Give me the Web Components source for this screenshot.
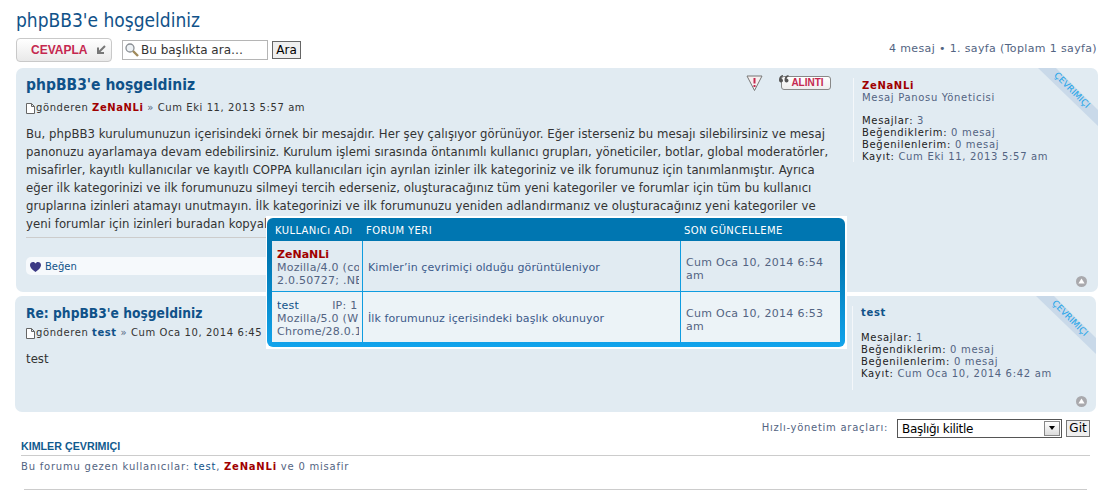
<!DOCTYPE html>
<html lang="tr">
<head>
<meta charset="utf-8">
<title>phpBB3'e hoşgeldiniz</title>
<style>
html, body { margin: 0; background: #fff; }
body { font-family: "DejaVu Sans", Verdana, sans-serif; width: 1111px; height: 493px; overflow: hidden; position: relative; }
</style>
</head>
<body>
<forum-page></forum-page>

<script>
// shared bits
const COND = '"DejaVu Sans Condensed", "DejaVu Sans", sans-serif';

class TopicToolbar extends HTMLElement {
  constructor() {
    super();
    this.attachShadow({mode: 'open'}).innerHTML = `
<style>
:host { display: flex; align-items: center; height: 24px; margin: 0 14px 6px 16px; font-family: "DejaVu Sans", sans-serif; }
.reply { box-sizing: border-box; width: 96px; height: 24px; border: 1px solid #c9c9c9; border-radius: 4px; background: linear-gradient(#fff, #e9e9e9); display: flex; align-items: center; padding-left: 14px; gap: 9px; font: bold 12px "Liberation Sans", sans-serif; color: #c5284f; }
.search { box-sizing: border-box; width: 146px; height: 20px; margin-left: 10px; border: 1px solid #b5b5b5; display: flex; align-items: center; gap: 1px; padding-left: 1px; font-size: 12px; color: #333; background: #fff; }
.go { box-sizing: border-box; width: 29px; height: 18px; margin-left: 4px; border: 1px solid #666; background: #efefef; font-size: 12px; line-height: 16px; text-align: center; color: #000; }
.pages { margin: 0 0 4px auto; font-size: 11px; color: #536482; letter-spacing: .36px; }
</style>
<div class="reply">CEVAPLA
  <svg width="10" height="10" viewBox="0 0 10 10"><path d="M9 1 3 7M2 2.5V8H8" fill="none" stroke="#777" stroke-width="2"/></svg>
</div>
<div class="search">
  <svg width="16" height="16" viewBox="0 0 16 16"><circle cx="6" cy="6" r="4" fill="#eef2f5" stroke="#8a8f94" stroke-width="1.3"/><path d="M9 9 14 14" stroke="#a08a5a" stroke-width="2.4"/></svg>
  <span>Bu başlıkta ara…</span>
</div>
<div class="go">Ara</div>
<div class="pages">4 mesaj • 1. sayfa (Toplam 1 sayfa)</div>`;
  }
}

class ForumPost extends HTMLElement {
  constructor() {
    super();
    const root = this.attachShadow({mode: 'open'});
    root.innerHTML = `
<style>
:host { display: block; position: relative; margin: 0 13px 4px 16px; background: #e1ebf2; border-radius: 7px; overflow: hidden; font-family: "DejaVu Sans", sans-serif; }
.wrap { display: flex; height: 100%; padding: 10px 0 0 var(--pad, 10px); box-sizing: border-box; }
.main { width: var(--main, 811px); flex: none; }
.side { box-sizing: border-box; margin-left: 16px; padding: var(--side-top, 2px) 0 0 8px; border-left: 1px solid #f4f7fa; font-size: 10px; line-height: 12px; letter-spacing: .68px; color: #536482; height: 84px; white-space: nowrap; }
h3 { margin: 0; font: bold var(--title, 15.5px)/15px ${COND}; color: #105289; }
.meta { display: flex; align-items: center; margin-top: var(--meta-gap, 9px); font-size: 10px; line-height: 12px; letter-spacing: .58px; color: #333; white-space: nowrap; }
.meta svg { margin-right: 1px; }
.raquo { color: #536482; }
.slot-box { display: block; margin-top: var(--body-gap, 11px); font: 13px/18px ${COND}; color: #333; white-space: nowrap; letter-spacing: .045px; }
.tools { position: absolute; top: 7px; left: 730px; display: flex; gap: 16px; align-items: flex-start; }
.quote { position: relative; width: 52px; height: 15px; }
.quote i { position: absolute; left: 2px; top: 1px; box-sizing: border-box; width: 50px; height: 14px; border: 1px solid #888; border-radius: 3px; background: linear-gradient(#fff, #eee); font: bold 10px/12px "Liberation Sans", sans-serif; color: #c5284f; text-align: center; padding-left: 3px; }
.quote svg { position: absolute; left: 0; top: 0; z-index: 1; }
.top { position: absolute; right: var(--top-right, 11px); bottom: 5px; width: 11px; height: 11px; }
.ribbon { position: absolute; right: 0; top: 0; width: 60px; height: 60px; background: #c9d9e9; clip-path: polygon(0 0, 18px 0, 60px 42px, 60px 58px); }
.ribbon-text { position: absolute; right: -9px; top: 17px; width: 70px; text-align: center; font: 9px/10px "DejaVu Sans", sans-serif; color: #1ea5ea; transform: rotate(45deg); }
</style>
<div class="wrap">
  <div class="main">
    <h3></h3>
    <div class="meta">
      <svg width="9" height="11" viewBox="0 0 9 11"><path d="M.5.5H5.5L8.5 3.5V10.5H.5ZM5.5.5V3.5H8.5" fill="#fff" stroke="#666"/></svg>
      <span>gönderen&nbsp;<slot name="author"></slot> <span class="raquo">»</span> <slot name="date"></slot></span>
    </div>
    <div class="slot-box"><slot></slot></div>
    <slot name="footer"></slot>
  </div>
  <div class="side"><slot name="profile"></slot></div>
</div>
<div class="ribbon"></div>
<div class="ribbon-text">ÇEVRIMIÇI</div>
<svg class="top" viewBox="0 0 11 11"><circle cx="5.5" cy="5.5" r="5.5" fill="#a9a9ad"/><path d="M5.5 2.6 8.6 7.4H2.4Z" fill="#fff"/></svg>`;
    root.querySelector('h3').textContent = this.getAttribute('heading');
    this.style.height = this.getAttribute('h') + 'px';
    if (this.hasAttribute('tools')) {
      const t = document.createElement('div');
      t.className = 'tools';
      t.innerHTML = `
<svg width="17" height="16" viewBox="0 0 17 16"><path d="M1 1H16L8.5 15.5Z" fill="#f6efef" stroke="#777"/><path d="M8.5 3V8.5M8.5 10V12" stroke="#c5284f" stroke-width="2"/></svg>
<div class="quote"><svg width="10" height="8" viewBox="0 0 10 8"><path d="M4 0C1.5 .5 0 2 0 5 0 6.5 .8 7.5 2 7.5S4 6.6 4 5.5 3.2 3.8 2.2 3.8C2.2 2.8 3 2 4 1.6ZM9.5 0C7 .5 5.5 2 5.5 5 5.5 6.5 6.3 7.5 7.5 7.5S9.5 6.6 9.5 5.5 8.7 3.8 7.7 3.8C7.7 2.8 8.5 2 9.5 1.6Z" fill="#555"/></svg><i>ALINTI</i></div>`;
      root.appendChild(t);
    }
  }
}

class LikeBar extends HTMLElement {
  constructor() {
    super();
    this.attachShadow({mode: 'open'}).innerHTML = `
<style>
:host { display: block; border-top: 1px solid #ccc; margin-top: 4px; padding-top: 19px; }
div { box-sizing: border-box; height: 18px; width: 100%; background: #f6f9fc; border-radius: 5px; display: flex; align-items: center; gap: 4px; padding: 2px 0 0 4px; font: 10px/12px "DejaVu Sans", sans-serif; color: #105289; }
</style>
<div>
  <svg width="11" height="10" viewBox="0 0 11 10"><path d="M5.5 10C3 8 0 6 0 3 0 1 1.5 0 3 0 4.2 0 5 .7 5.5 1.5 6 .7 6.8 0 8 0 9.5 0 11 1 11 3 11 6 8 8 5.5 10Z" fill="#3c3a85"/></svg>
  <span>Beğen</span>
</div>`;
  }
}

class OnlinePopup extends HTMLElement {
  constructor() {
    super();
    this.attachShadow({mode: 'open'}).innerHTML = `
<style>
:host { display: block; position: absolute; left: 266px; top: 216px; box-sizing: border-box; width: 581px; height: 133px; background: #fff; padding: 2px 2px 2px 1px; font-family: "DejaVu Sans", sans-serif; }
.box { box-sizing: border-box; height: 100%; padding: 0 5px 5px; border-radius: 6px; background: linear-gradient(#0076b1 0, #0076b1 30%, #12a4ec 100%); }
.grid { display: grid; grid-template-columns: 90px 318px 160px; grid-template-rows: 23px 50px 51px; }
.th { color: #fff; font-size: 10px; line-height: 25px; height: 23px; letter-spacing: .4px; padding-left: 3px; white-space: nowrap; }
.th + .th { padding-left: 4px; }
.td { box-sizing: border-box; background: #e1ebf2; border-left: 1px solid #0f9ce0; font-size: 11px; line-height: 13px; color: #536482; overflow: hidden; white-space: nowrap; letter-spacing: .1px; }
.first { border-left: 0; }
.alt { background: #ecf3f7; border-top: 1px solid #0f9ce0; }
.user { padding: 7px 0 0 5px; letter-spacing: .25px; }
.where { padding: 2px 0 0 5px; display: flex; align-items: center; color: #3c5a8a; }
.when { padding: 5px 5px 0; display: flex; align-items: center; white-space: normal; letter-spacing: .3px; }
.user b { display: block; color: #a00000; letter-spacing: 0; }
.row { display: flex; color: #536482; }
.row em { font-style: normal; color: #105289; }
.row span { margin-left: 33px; }
.ua { width: 82px; overflow: hidden; }
</style>
<div class="box"><div class="grid">
  <div class="th">KULLANıCı ADı</div><div class="th">FORUM YERI</div><div class="th">SON GÜNCELLEME</div>
  <div class="td first user"><b>ZeNaNLi</b><div class="ua">Mozilla/4.0 (co</div><div class="ua">2.0.50727; .NE</div></div>
  <div class="td where">Kimler’in çevrimiçi olduğu görüntüleniyor</div>
  <div class="td when">Cum Oca 10, 2014 6:54 am</div>
  <div class="td first alt user"><div class="row ua"><em>test</em><span>IP: 1</span></div><div class="ua">Mozilla/5.0 (W</div><div class="ua">Chrome/28.0.1</div></div>
  <div class="td alt where">İlk forumunuz içerisindeki başlık okunuyor</div>
  <div class="td alt when">Cum Oca 10, 2014 6:53 am</div>
</div></div>`;
  }
}

class QuickMod extends HTMLElement {
  constructor() {
    super();
    this.attachShadow({mode: 'open'}).innerHTML = `
<style>
:host { display: flex; justify-content: flex-end; align-items: center; height: 20px; margin: 6px 21px 0 0; font-family: "DejaVu Sans", sans-serif; }
label { font-size: 10px; letter-spacing: .72px; color: #536482; margin: 0 9px 2px 0; }
.sel { box-sizing: border-box; width: 165px; height: 19px; border: 1px solid #555; background: #fff; display: flex; align-items: center; justify-content: space-between; padding: 1px 0 0 4px; font-size: 12px; letter-spacing: -.3px; color: #000; }
.sel i { box-sizing: border-box; width: 16px; height: 15px; margin: -1px 1px 0 0; border: 1px solid #888; background: linear-gradient(#fff, #dcdcdc); display: flex; align-items: center; justify-content: center; }
.sel i::after { content: ""; border: 3.5px solid transparent; border-top: 4px solid #000; border-bottom: 0; }
.git { box-sizing: border-box; width: 24px; height: 17px; margin-left: 4px; border: 1px solid #777; background: #efefef; font-size: 12px; line-height: 15px; text-align: center; color: #000; }
</style>
<label>Hızlı-yönetim araçları:</label>
<div class="sel">Başlığı kilitle<i></i></div>
<div class="git">Git</div>`;
  }
}

class OnlineBlock extends HTMLElement {
  constructor() {
    super();
    this.attachShadow({mode: 'open'}).innerHTML = `
<style>
:host { display: block; margin: 2px 21px 0 21px; font-family: "DejaVu Sans", sans-serif; }
h3 { margin: 0; padding-bottom: 2px; border-bottom: 1px solid #ccc; font: bold 10.7px/13px "Liberation Sans", sans-serif; color: #115a8e; }
p { margin: 4px 0 0; font-size: 10px; line-height: 13px; letter-spacing: .78px; color: #536482; }
p a { color: #105289; }
p b { color: #a00000; }
hr { border: 0; border-top: 1px solid #ccc; margin: 16px 3px 0; }
</style>
<h3>KIMLER ÇEVRIMIÇI</h3>
<p>Bu forumu gezen kullanıcılar: <a>test</a>, <b>ZeNaNLi</b> ve 0 misafir</p>
<hr>`;
  }
}

class ForumPage extends HTMLElement {
  constructor() {
    super();
    this.attachShadow({mode: 'open'}).innerHTML = `
<style>
:host { display: block; font-family: "DejaVu Sans", sans-serif; }
h2 { margin: 0; padding: 10px 0 0 16px; height: 28px; font: 19px/20px ${COND}; color: #105289; }
.red { color: #a00000; font-weight: bold; }
.blue { color: #105289; font-weight: bold; }
.k { color: #222; }
.role, .val { color: #536482; }
.gap { height: 11px; }
.second { --pad: 11px; --main: 810px; --title: 13.7px; --meta-gap: 6px; --body-gap: 11px; --top-right: 9px; --side-top: 1px; margin: 0 15px 0 15px; }
</style>
<h2>phpBB3'e hoşgeldiniz</h2>
<topic-toolbar></topic-toolbar>
<forum-post heading="phpBB3'e hoşgeldiniz" h="224" tools>
  <span slot="author" style="color:#a00000;font-weight:bold">ZeNaNLi</span>
  <span slot="date">Cum Eki 11, 2013 5:57 am</span>
  Bu, phpBB3 kurulumunuzun içerisindeki örnek bir mesajdır. Her şey çalışıyor görünüyor. Eğer isterseniz bu mesajı silebilirsiniz ve mesaj<br>
  panonuzu ayarlamaya devam edebilirsiniz. Kurulum işlemi sırasında öntanımlı kullanıcı grupları, yöneticiler, botlar, global moderatörler,<br>
  misafirler, kayıtlı kullanıcılar ve kayıtlı COPPA kullanıcıları için ayrılan izinler ilk kategoriniz ve ilk forumunuz için tanımlanmıştır. Ayrıca<br>
  eğer ilk kategorinizi ve ilk forumunuzu silmeyi tercih ederseniz, oluşturacağınız tüm yeni kategoriler ve forumlar için tüm bu kullanıcı<br>
  gruplarına izinleri atamayı unutmayın. İlk kategorinizi ve ilk forumunuzu yeniden adlandırmanız ve oluşturacağınız yeni kategoriler ve<br>
  yeni forumlar için izinleri buradan kopyal
  <like-bar slot="footer"></like-bar>
  <div slot="profile">
    <div class="red">ZeNaNLi</div>
    <div class="role">Mesaj Panosu Yöneticisi</div>
    <div class="gap"></div>
    <div><span class="k">Mesajlar:</span> <span class="val">3</span></div>
    <div><span class="k">Beğendiklerim:</span> <span class="val">0 mesaj</span></div>
    <div><span class="k">Beğenilenlerim:</span> <span class="val">0 mesaj</span></div>
    <div><span class="k">Kayıt:</span> <span class="val">Cum Eki 11, 2013 5:57 am</span></div>
  </div>
</forum-post>
<forum-post class="second" heading="Re: phpBB3'e hoşgeldiniz" h="116">
  <span slot="author" style="color:#105289;font-weight:bold">test</span>
  <span slot="date">Cum Oca 10, 2014 6:45</span>
  test
  <div slot="profile">
    <div class="blue">test</div>
    <div class="gap" style="height:13px"></div>
    <div><span class="k">Mesajlar:</span> <span class="val">1</span></div>
    <div><span class="k">Beğendiklerim:</span> <span class="val">0 mesaj</span></div>
    <div><span class="k">Beğenilenlerim:</span> <span class="val">0 mesaj</span></div>
    <div><span class="k">Kayıt:</span> <span class="val">Cum Oca 10, 2014 6:42 am</span></div>
  </div>
</forum-post>
<quick-mod></quick-mod>
<online-block></online-block>
<online-popup></online-popup>`;
  }
}

customElements.define('topic-toolbar', TopicToolbar);
customElements.define('forum-post', ForumPost);
customElements.define('like-bar', LikeBar);
customElements.define('online-popup', OnlinePopup);
customElements.define('quick-mod', QuickMod);
customElements.define('online-block', OnlineBlock);
customElements.define('forum-page', ForumPage);
</script>
</body>
</html>
